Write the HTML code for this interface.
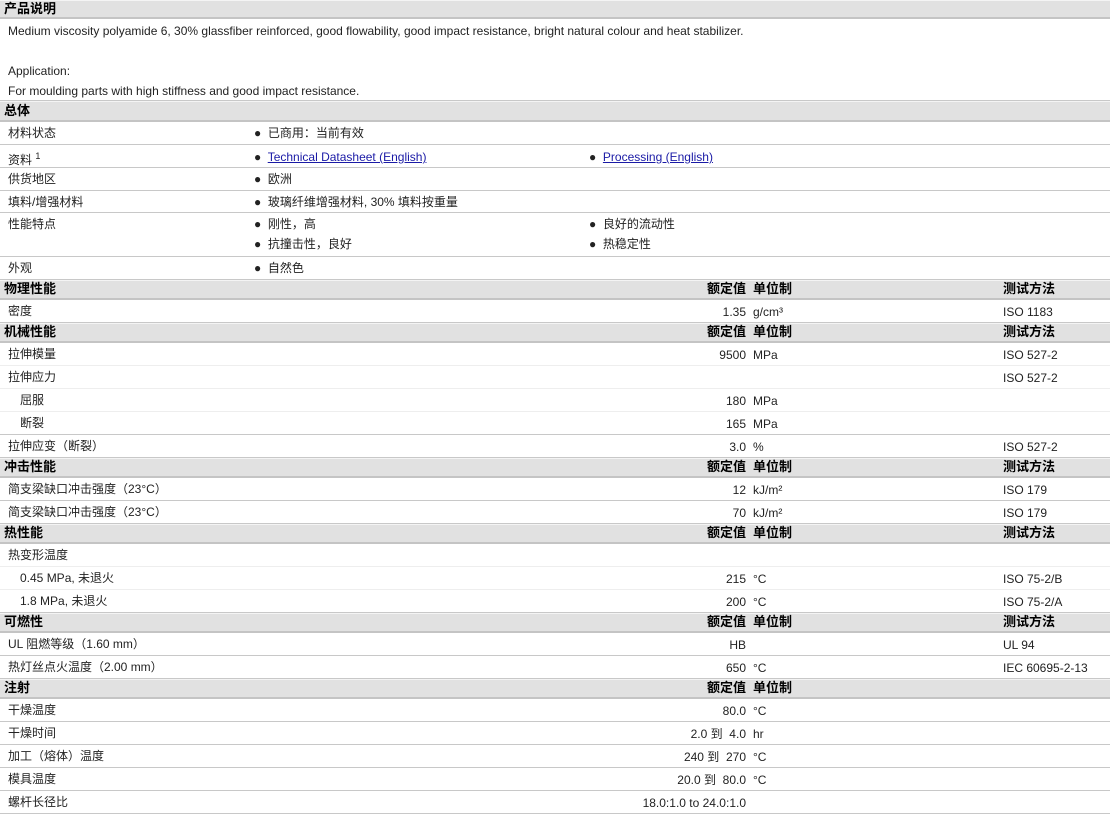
<!DOCTYPE html>
<html><head><meta charset="utf-8"><style>
*{margin:0;padding:0;box-sizing:border-box}
body{width:1110px;height:811px;overflow:hidden;background:#fff;font-family:"Liberation Sans","Noto Sans CJK SC",sans-serif;font-size:12px;color:#222}
.r{position:relative;border-bottom:1px solid #c8c8c8;width:1110px}
.h{background:#e1e1e1;border-top:1px solid #f4f4f4;border-bottom:2px solid #c4c4c4;font-weight:bold;font-size:13px;color:#000}
.s{border-bottom:1px solid #eee}
.r span{position:absolute;white-space:nowrap;line-height:14px}
.l{left:8px}.l2{left:20px}
.b1{left:254px}.b2{left:589px}
.v{right:364px;text-align:right}
.u{left:753px}
.t{left:1003px}
a{color:#1a1aa6;text-decoration:underline}
.h .l{left:4px}
</style></head><body>
<div class="r h" style="height:19px"><span class="l" style="top:1px">产品说明</span></div>
<div class="r" style="height:82px">
<span class="l" style="top:5px">Medium viscosity polyamide 6, 30% glassfiber reinforced, good flowability, good impact resistance, bright natural colour and heat stabilizer.</span>
<span class="l" style="top:45px">Application:</span>
<span class="l" style="top:65px">For moulding parts with high stiffness and good impact resistance.</span></div>
<div class="r h" style="height:21px"><span class="l" style="top:2px">总体</span></div>
<div class="r" style="height:23px"><span class="l" style="top:4px">材料状态</span><span class="b1" style="top:4px">●&nbsp; 已商用：当前有效</span></div>
<div class="r" style="height:23px"><span class="l" style="top:4px">资料 <sup style="font-size:9px">1</sup></span><span class="b1" style="top:5px">●&nbsp; <a>Technical Datasheet (English)</a></span><span class="b2" style="top:5px">●&nbsp; <a>Processing (English)</a></span></div>
<div class="r" style="height:23px"><span class="l" style="top:4px">供货地区</span><span class="b1" style="top:4px">●&nbsp; 欧洲</span></div>
<div class="r" style="height:22px"><span class="l" style="top:4px">填料/增强材料</span><span class="b1" style="top:4px">●&nbsp; 玻璃纤维增强材料, 30% 填料按重量</span></div>
<div class="r" style="height:44px"><span class="l" style="top:4px">性能特点</span><span class="b1" style="top:4px">●&nbsp; 刚性，高</span><span class="b2" style="top:4px">●&nbsp; 良好的流动性</span><span class="b1" style="top:24px">●&nbsp; 抗撞击性，良好</span><span class="b2" style="top:24px">●&nbsp; 热稳定性</span></div>
<div class="r" style="height:23px"><span class="l" style="top:4px">外观</span><span class="b1" style="top:4px">●&nbsp; 自然色</span></div>
<div class="r h" style="height:20px"><span class="l" style="top:1px">物理性能</span><span class="v" style="top:1px">额定值</span><span class="u" style="top:1px">单位制</span><span class="t" style="top:1px">测试方法</span></div>
<div class="r" style="height:23px"><span class="l" style="top:4px">密度</span><span class="v" style="top:5px">1.35</span><span class="u" style="top:5px">g/cm³</span><span class="t" style="top:5px">ISO 1183</span></div>
<div class="r h" style="height:20px"><span class="l" style="top:1px">机械性能</span><span class="v" style="top:1px">额定值</span><span class="u" style="top:1px">单位制</span><span class="t" style="top:1px">测试方法</span></div>
<div class="r s" style="height:23px"><span class="l" style="top:4px">拉伸模量</span><span class="v" style="top:5px">9500</span><span class="u" style="top:5px">MPa</span><span class="t" style="top:5px">ISO 527-2</span></div>
<div class="r s" style="height:23px"><span class="l" style="top:4px">拉伸应力</span><span class="t" style="top:5px">ISO 527-2</span></div>
<div class="r s" style="height:23px"><span class="l2" style="top:4px">屈服</span><span class="v" style="top:5px">180</span><span class="u" style="top:5px">MPa</span></div>
<div class="r" style="height:23px"><span class="l2" style="top:4px">断裂</span><span class="v" style="top:5px">165</span><span class="u" style="top:5px">MPa</span></div>
<div class="r" style="height:23px"><span class="l" style="top:4px">拉伸应变（断裂）</span><span class="v" style="top:5px">3.0</span><span class="u" style="top:5px">%</span><span class="t" style="top:5px">ISO 527-2</span></div>
<div class="r h" style="height:20px"><span class="l" style="top:1px">冲击性能</span><span class="v" style="top:1px">额定值</span><span class="u" style="top:1px">单位制</span><span class="t" style="top:1px">测试方法</span></div>
<div class="r" style="height:23px"><span class="l" style="top:4px">简支梁缺口冲击强度（23°C）</span><span class="v" style="top:5px">12</span><span class="u" style="top:5px">kJ/m²</span><span class="t" style="top:5px">ISO 179</span></div>
<div class="r" style="height:23px"><span class="l" style="top:4px">简支梁缺口冲击强度（23°C）</span><span class="v" style="top:5px">70</span><span class="u" style="top:5px">kJ/m²</span><span class="t" style="top:5px">ISO 179</span></div>
<div class="r h" style="height:20px"><span class="l" style="top:1px">热性能</span><span class="v" style="top:1px">额定值</span><span class="u" style="top:1px">单位制</span><span class="t" style="top:1px">测试方法</span></div>
<div class="r s" style="height:23px"><span class="l" style="top:4px">热变形温度</span></div>
<div class="r s" style="height:23px"><span class="l2" style="top:4px">0.45 MPa, 未退火</span><span class="v" style="top:5px">215</span><span class="u" style="top:5px">°C</span><span class="t" style="top:5px">ISO 75-2/B</span></div>
<div class="r" style="height:23px"><span class="l2" style="top:4px">1.8 MPa, 未退火</span><span class="v" style="top:5px">200</span><span class="u" style="top:5px">°C</span><span class="t" style="top:5px">ISO 75-2/A</span></div>
<div class="r h" style="height:20px"><span class="l" style="top:1px">可燃性</span><span class="v" style="top:1px">额定值</span><span class="u" style="top:1px">单位制</span><span class="t" style="top:1px">测试方法</span></div>
<div class="r" style="height:23px"><span class="l" style="top:4px">UL 阻燃等级（1.60 mm）</span><span class="v" style="top:5px">HB</span><span class="t" style="top:5px">UL 94</span></div>
<div class="r" style="height:23px"><span class="l" style="top:4px">热灯丝点火温度（2.00 mm）</span><span class="v" style="top:5px">650</span><span class="u" style="top:5px">°C</span><span class="t" style="top:5px">IEC 60695-2-13</span></div>
<div class="r h" style="height:20px"><span class="l" style="top:1px">注射</span><span class="v" style="top:1px">额定值</span><span class="u" style="top:1px">单位制</span></div>
<div class="r" style="height:23px"><span class="l" style="top:4px">干燥温度</span><span class="v" style="top:5px">80.0</span><span class="u" style="top:5px">°C</span></div>
<div class="r" style="height:23px"><span class="l" style="top:4px">干燥时间</span><span class="v" style="top:5px">2.0 到 &nbsp;4.0</span><span class="u" style="top:5px">hr</span></div>
<div class="r" style="height:23px"><span class="l" style="top:4px">加工（熔体）温度</span><span class="v" style="top:5px">240 到 &nbsp;270</span><span class="u" style="top:5px">°C</span></div>
<div class="r" style="height:23px"><span class="l" style="top:4px">模具温度</span><span class="v" style="top:5px">20.0 到 &nbsp;80.0</span><span class="u" style="top:5px">°C</span></div>
<div class="r" style="height:23px"><span class="l" style="top:4px">螺杆长径比</span><span class="v" style="top:5px">18.0:1.0 to 24.0:1.0</span></div>
</body></html>
